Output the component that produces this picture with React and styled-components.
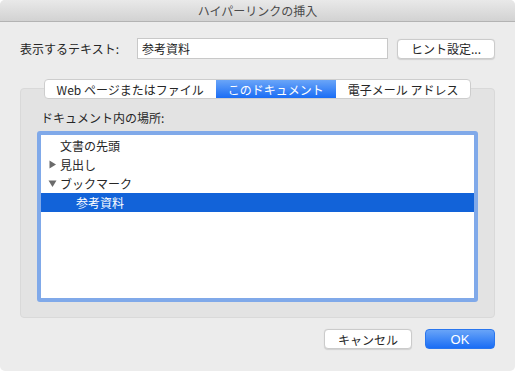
import React, { useState } from 'react';
import styled, { createGlobalStyle } from 'styled-components';

const GlobalStyle = createGlobalStyle`
    html, body {
        margin: 0;
        padding: 0;
        background: #ffffff;
    }
    body {
        font-family: "Noto Sans CJK JP", "Liberation Sans", sans-serif;
        font-size: 12px;
        color: #222;
        -webkit-font-smoothing: antialiased;
    }
`;

const tabs = ['Web ページまたはファイル', 'このドキュメント', '電子メール アドレス'];

const places = [
    { label: '文書の先頭', level: 0, arrow: null },
    { label: '見出し', level: 0, arrow: 'closed' },
    { label: 'ブックマーク', level: 0, arrow: 'open' },
    { label: '参考資料', level: 1, arrow: null, selected: true },
];

function Arrow({ open }) {
    return (
        <ArrowBox>
            <svg width="9" height="9" viewBox="0 0 9 9">
                {open
                    ? <polygon points="0.5,1.5 8.5,1.5 4.5,8" fill="#6b6b6b" />
                    : <polygon points="1.5,0.5 8,4.5 1.5,8.5" fill="#6b6b6b" />}
            </svg>
        </ArrowBox>
    );
}

function App() {
    const [activeTab, setActiveTab] = useState(1);
    const [text, setText] = useState('参考資料');

    return (
        <>
            <GlobalStyle />
            <Window>
                <TitleBar>ハイパーリンクの挿入</TitleBar>
                <Content>
                    <TextRow>
                        <Label>表示するテキスト:</Label>
                        <TextInput value={text} onChange={(e) => setText(e.target.value)} />
                        <PushButton $width={98}>ヒント設定...</PushButton>
                    </TextRow>

                    <Group>
                        <TabBar>
                            {tabs.map((t, i) => (
                                <Tab key={t} $active={i === activeTab} onClick={() => setActiveTab(i)}>{t}</Tab>
                            ))}
                        </TabBar>
                        <GroupBox>
                            <Label $indent={4}>ドキュメント内の場所:</Label>
                            <ListBox>
                                {places.map((p) => (
                                    <ListRow key={p.label} $selected={p.selected} $level={p.level}>
                                        {p.arrow ? <Arrow open={p.arrow === 'open'} /> : <ArrowBox />}
                                        {p.label}
                                    </ListRow>
                                ))}
                            </ListBox>
                        </GroupBox>
                    </Group>

                    <Footer>
                        <PushButton $width={88}>キャンセル</PushButton>
                        <DefaultButton>OK</DefaultButton>
                    </Footer>
                </Content>
            </Window>
        </>
    );
}

const Window = styled.div`
    width: 515px;
    height: 371px;
    background: #ececec;
    border-radius: 5px;
    overflow: hidden;
    display: flex;
    flex-direction: column;
    box-sizing: border-box;
`;

const TitleBar = styled.div`
    height: 21px;
    line-height: 22px;
    text-align: center;
    font-size: 12px;
    color: #4b4b4b;
    background: linear-gradient(to bottom, #e9e9e9, #d2d2d2);
    border-bottom: 1px solid #b3b3b3;
    flex-shrink: 0;
`;

const Content = styled.div`
    display: flex;
    flex-direction: column;
    padding: 16px 20px 0 20px;
`;

const TextRow = styled.div`
    display: flex;
    flex-direction: row;
    align-items: center;
    height: 21px;
`;

const Label = styled.div`
    font-size: 12px;
    color: #262626;
    line-height: 16px;
    margin-left: ${(p) => p.$indent || 0}px;
`;

const TextInput = styled.input`
    box-sizing: border-box;
    width: 251px;
    height: 21px;
    margin-left: auto;
    margin-right: 9px;
    border: 1px solid #c8c8c8;
    background: #fff;
    font-family: "Noto Sans CJK JP", "Liberation Sans", sans-serif;
    font-size: 12px;
    color: #222;
    padding: 0 4px;
    outline: none;
`;

const PushButton = styled.div`
    box-sizing: border-box;
    width: ${(p) => p.$width}px;
    height: 20px;
    background: #fff;
    border: 1px solid #cbcbcb;
    border-radius: 4px;
    box-shadow: 0 0.5px 1px rgba(0, 0, 0, 0.12);
    display: flex;
    align-items: center;
    justify-content: center;
    font-size: 12px;
    color: #262626;
`;

const DefaultButton = styled.div`
    box-sizing: border-box;
    width: 70px;
    height: 20px;
    border-radius: 4px;
    background: linear-gradient(to bottom, #68a4f8, #1a6df5);
    border: 1px solid #2a76ee;
    display: flex;
    align-items: center;
    justify-content: center;
    color: #fff;
    font-family: "Liberation Sans", "Noto Sans CJK JP", sans-serif;
    font-size: 13px;
`;

const Group = styled.div`
    display: flex;
    flex-direction: column;
    margin-top: 20px;
`;

const TabBar = styled.div`
    align-self: center;
    display: flex;
    flex-direction: row;
    height: 20px;
    background: #fff;
    border: 1px solid #cdcdcd;
    border-radius: 4px;
    overflow: hidden;
    margin-bottom: -11px;
    position: relative;
    z-index: 1;
    box-sizing: border-box;
`;

const Tab = styled.div`
    display: flex;
    align-items: center;
    padding: 0 12px;
    font-size: 12px;
    color: ${(p) => (p.$active ? '#fff' : '#262626')};
    background: ${(p) => (p.$active ? 'linear-gradient(to bottom, #6aa5f8, #1a6df5)' : 'transparent')};
    cursor: default;
`;

const GroupBox = styled.div`
    box-sizing: border-box;
    height: 230px;
    background: #e3e3e3;
    border: 1px solid #d9d9d9;
    border-radius: 4px;
    padding: 21px 16px 15px 16px;
    display: flex;
    flex-direction: column;
    gap: 5px;
`;

const ListBox = styled.div`
    flex: 1;
    background: #fff;
    border: 4px solid #80a9e9;
    border-radius: 3px;
    padding-top: 1px;
    box-sizing: border-box;
    display: flex;
    flex-direction: column;
`;

const ListRow = styled.div`
    display: flex;
    align-items: center;
    height: 19px;
    padding-left: ${(p) => 7 + p.$level * 16}px;
    font-size: 12px;
    color: ${(p) => (p.$selected ? '#fff' : '#262626')};
    background: ${(p) => (p.$selected ? '#1263d9' : 'transparent')};
`;

const ArrowBox = styled.span`
    display: inline-flex;
    align-items: center;
    width: 12px;
    height: 19px;
`;

const Footer = styled.div`
    display: flex;
    flex-direction: row;
    justify-content: flex-end;
    gap: 13px;
    margin-top: 11px;
`;

export default App;
